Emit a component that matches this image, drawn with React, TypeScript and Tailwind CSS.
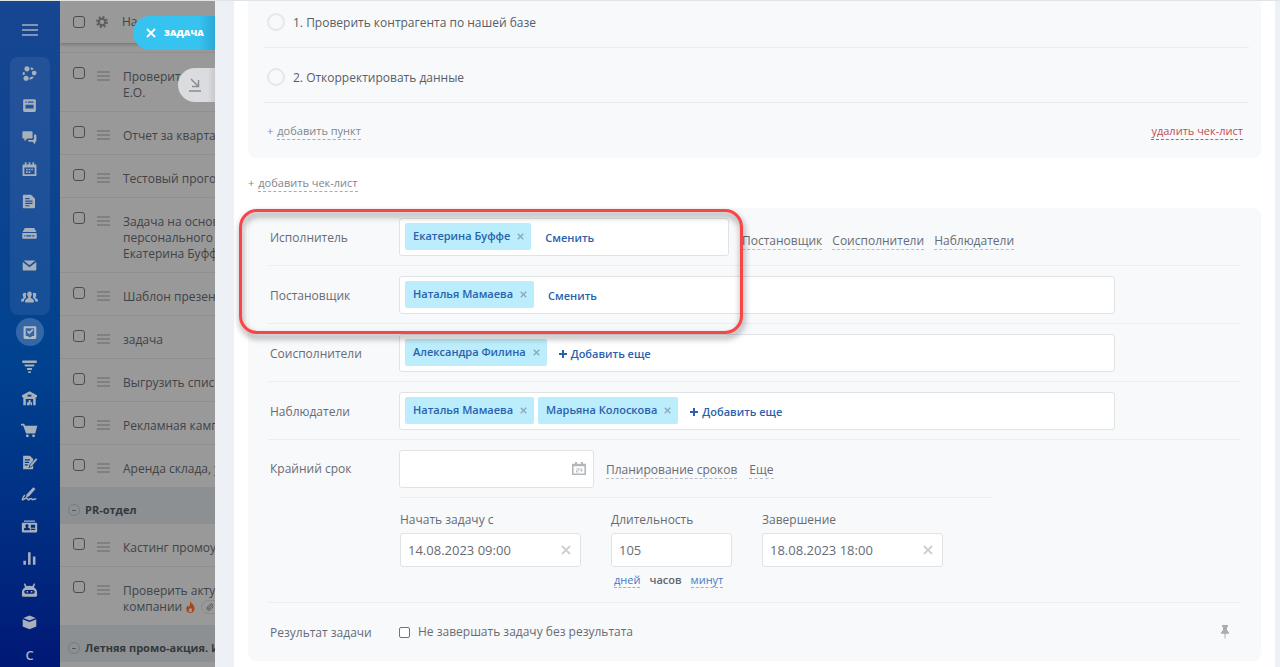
import type { ReactNode } from 'react';
import { Paperclip } from 'lucide-react';

const menuIcons: { name: string; icon: ReactNode }[] = [
  {
    name: 'Совместная работа',
    icon: (
      <>
        <circle cx="7" cy="4.500" r="3" />
        <circle cx="15.500" cy="9.500" r="2.800" />
        <circle cx="6" cy="15.500" r="3" />
        <path d="M11.500 3.800a6.500 6.500 0 0 1 2.500 1.500M14 14a6.500 6.500 0 0 1-4 2.300M3.500 8.500a7 7 0 0 0-.3 3" fill="none" stroke="currentColor" strokeWidth="2.400" />
      </>
    ),
  },
  {
    name: 'Лента',
    icon: <path fillRule="evenodd" d="M4 2.500h12A1.500 1.500 0 0 1 17.500 4v12a1.500 1.500 0 0 1-1.500 1.500H4A1.500 1.500 0 0 1 2.500 16V4A1.500 1.500 0 0 1 4 2.500Zm1.200 2.700v1.600h1.600V5.200Zm2.900 0v1.600h6.700V5.200ZM5.200 9v4.500h9.600V9Z" />,
  },
  {
    name: 'Чат',
    icon: <path d="M3 2.500h9.200c.8 0 1.400.6 1.400 1.400v6c0 .8-.6 1.400-1.400 1.400H7.500L4 14.300v-3H3c-.8 0-1.400-.6-1.400-1.400v-6c0-.8.6-1.400 1.400-1.400Zm12.200 4h1.500c.8 0 1.400.6 1.400 1.400v5.800c0 .8-.6 1.400-1.400 1.400v3L13.500 15H9.700c-.8 0-1.400-.6-1.400-1.400v-.8h5.500c.8 0 1.400-.6 1.400-1.400Z" />,
  },
  {
    name: 'Календарь',
    icon: <path fillRule="evenodd" d="M4.500 1.500h2V4H9V1.500h2V4h2.500V1.500h2V4H17c.7 0 1.200.5 1.200 1.200v11.300c0 .7-.5 1.200-1.200 1.200H3c-.7 0-1.200-.5-1.200-1.200V5.200C1.800 4.500 2.300 4 3 4h1.500ZM4 7.500v8h12v-8ZM6 9h2v2H6Zm3 0h2v2H9Zm3 0h2v2h-2Zm-6 3h2v2H6Zm3 0h2v2H9Z" />,
  },
  {
    name: 'Документы',
    icon: <path fillRule="evenodd" d="M3.500 2h8.300L16.500 6.700v10c0 .7-.5 1.300-1.300 1.300H3.500c-.8 0-1.300-.6-1.300-1.300V3.300C2.200 2.600 2.700 2 3.500 2ZM5 6v1.400h5V6Zm0 2.800v1.400h8.500V8.800Zm0 2.800V13h8.500v-1.400Zm0 2.700v1.400h5v-1.400Z" />,
  },
  {
    name: 'Диск',
    icon: <path fillRule="evenodd" d="M4.500 3.500h11L18.200 8.300H1.800ZM1.500 9.500h17V15c0 .8-.6 1.300-1.300 1.300H2.800c-.7 0-1.300-.5-1.300-1.300Zm2.500 2.600v1.400h1.300v-1.400Zm2.300 0v1.400h5.700v-1.400Zm7 0v1.400h2.500v-1.400Z" />,
  },
  {
    name: 'Почта',
    icon: <path d="M3 4h14l-7 5.700ZM2 5.800l8 6.200 8-6.200v9c0 .7-.5 1.200-1.200 1.200H3.200C2.500 16 2 15.500 2 14.800Z" />,
  },
  {
    name: 'Группы',
    icon: (
      <>
        <path d="M10 3c1.700 0 2.700 1.200 2.700 3 0 1.500-.6 2.600-1.200 3.200v1.500l2.600 1.300c.7.400 1 1 1 1.900V16H4.900v-2.100c0-.9.3-1.500 1-1.900l2.600-1.300V9.200C7.900 8.600 7.300 7.500 7.300 6c0-1.800 1-3 2.700-3Z" />
        <path d="M4.300 4.500c-1.500 0-2.300 1-2.300 2.500 0 1.200.4 2 .9 2.500v1.200L1 11.800c-.6.3-1 .9-1 1.700v1.300h3.400c0-2 .4-3 1.500-3.700l1.200-.7c-.6-1.800-.3-3.900.1-5.200-.5-.4-1.200-.7-1.900-.7ZM15.700 4.500c1.500 0 2.300 1 2.300 2.500 0 1.200-.4 2-.9 2.500v1.200l1.900 1.100c.6.300 1 .9 1 1.700v1.300h-3.400c0-2-.4-3-1.500-3.700l-1.200-.7c.6-1.800.3-3.900-.1-5.200.5-.4 1.200-.7 1.900-.7Z" />
      </>
    ),
  },
  {
    name: 'Задачи',
    icon: <path fillRule="evenodd" d="M4.500 2.500h12A1.500 1.500 0 0 1 18 4v12a1.500 1.500 0 0 1-1.500 1.500h-12A1.500 1.500 0 0 1 3 16V4a1.500 1.500 0 0 1 1.500-1.500Zm1 2.500v9H8l1.300 1.500h2.400L13 14h2.500V5ZM7 9l1.300-1.300 1.500 1.500 3.600-3.400L14.700 7l-4.900 5Z" />,
  },
  {
    name: 'CRM',
    icon: <path d="M1.500 3h17v2.800h-17Zm2.500 4.500h12l-.8 2.500H4.800Zm2.700 4.200h6.600l-.8 2.300H7.500Zm1.800 3.800h3v2h-3Z" />,
  },
  {
    name: 'Склад',
    icon: <path fillRule="evenodd" d="m10 1.500 8.800 4.600v2.500h-1.500v9.200h-3V10.500H5.700v7.300h-3V8.600H1.200V6.100ZM7.800 5.500v2h4.400v-2ZM7 14.500h2v-2.700h2.200v2.700H13v3.300h-1.700V16h-1v1.800H7Z" />,
  },
  {
    name: 'Магазин',
    icon: (
      <>
        <path d="M0 2h3.700l1.200 2.500h14.300l-2.400 9H6L2.500 4H0Z" />
        <circle cx="7.500" cy="16.300" r="1.700" />
        <circle cx="14.800" cy="16.300" r="1.700" />
      </>
    ),
  },
  {
    name: 'Шаблоны',
    icon: (
      <>
        <path fillRule="evenodd" d="M2.500 2h8L14.300 5.800v2L10 12.500l-1.200 4 3.500-1.200 2-2v3.400c0 .8-.5 1.300-1.300 1.300H2.500Zm2 4.300v1.400h6V6.300Zm0 2.900v1.400h5V9.200Zm0 2.800v1.400H8V12Z" />
        <path d="m17.500 5 1.700 1.400-6.400 7.700-2.600 1.200.7-2.700Z" />
      </>
    ),
  },
  {
    name: 'Подпись',
    icon: (
      <>
        <path d="m14.500 1.500 2.500 2-7.500 8.700-4 1.600 1.300-4Z" />
        <path d="M4.500 10.500C2.500 13 1 15.200 1.700 16c.9.900 3.300-2.200 5-2 1.100.2.900 2.200 2.200 2.200 1.100 0 1.600-1.600 2.700-1.600s1.200 1.400 2.300 1.400 2.100-.9 4.100-1" fill="none" stroke="currentColor" strokeWidth="1.800" />
      </>
    ),
  },
  {
    name: 'Контакты',
    icon: <path fillRule="evenodd" d="M3.500 3h13v1.500h-13ZM2 5.500h16c.6 0 1 .4 1 1v9.500c0 .6-.4 1-1 1H2c-.6 0-1-.4-1-1V6.500c0-.6.4-1 1-1ZM7 7.300c-1.200 0-1.900.8-1.900 1.900 0 .9.4 1.500.9 1.900l-2.500 1.300v2h7v-2L8 11.100c.5-.4.9-1 .9-1.900 0-1.100-.7-1.900-1.900-1.900Zm4.600.7v3.500h5V8Zm0 4.500v1.500h5v-1.500Z" />,
  },
  {
    name: 'Аналитика',
    icon: <path d="M2.800 12.500h3v4.800h-3Zm5.500-10h3v14.800h-3ZM14 7.500h3v9.800h-3Z" />,
  },
  {
    name: 'Роботы',
    icon: <path fillRule="evenodd" d="m4.500 1.500 2.300 3.600a9 9 0 0 1 6.400 0l2.300-3.600 1.200.8-1.500 3.800c2.300 1.300 3.600 3.300 3.700 6.200V16c0 .8-.5 1.300-1.300 1.300H2.400c-.8 0-1.300-.5-1.300-1.300v-3.700c.1-2.900 1.400-4.900 3.700-6.200L3.300 2.300ZM6 9.300a2.200 2.200 0 0 0 0 4.400h8a2.200 2.200 0 0 0 0-4.400Zm.6 1.400h1.800v1.700H6.600Zm5 0h1.800v1.700h-1.800Z" />,
  },
  {
    name: 'Маркет',
    icon: <path d="m10 1.800 7.300 2.900L10 7.600 2.700 4.700ZM2 6.200l8 3.200 8-3.200v8.500L10 18l-8-3.300Z" />,
  },
];

type ListItem = { group?: boolean; title: string; lines: string[]; fire?: boolean };

const tasks: ListItem[] = [
  { title: 'Проверить', lines: ['Проверит', 'Е.О.'] },
  { title: 'Отчет', lines: ['Отчет за кварта.'] },
  { title: 'Прогон', lines: ['Тестовый прого'] },
  { title: 'Персональный', lines: ['Задача на основ', 'персонального', 'Екатерина Буфф'] },
  { title: 'Шаблон', lines: ['Шаблон презен'] },
  { title: 'задача', lines: ['задача'] },
  { title: 'Выгрузка', lines: ['Выгрузить списс'] },
  { title: 'Реклама', lines: ['Рекламная камп'] },
  { title: 'Аренда', lines: ['Аренда склада, у'] },
  { group: true, title: 'PR-отдел', lines: [] },
  { title: 'Кастинг', lines: ['Кастинг промоу'] },
  { title: 'Актуальность', lines: ['Проверить актуа', 'компании'], fire: true },
  { group: true, title: 'Летняя промо-акция. И', lines: [] },
];

const dashed = 'border-b border-dashed whitespace-nowrap';

function Cross({ className }: { className: string }) {
  return (
    <svg viewBox="0 0 10 10" className={className} stroke="currentColor" strokeWidth="1.800">
      <path d="M1 1l8 8M9 1l-8 8" />
    </svg>
  );
}

function MenuIcon({ index }: { index: number }) {
  const item = menuIcons[index];
  return (
    <a href="#" aria-label={item.name} className="flex h-8 w-10 shrink-0 items-center justify-center">
      <svg viewBox="0 0 20 20" className="size-[17px]" fill="currentColor">{item.icon}</svg>
    </a>
  );
}

function SideMenu() {
  return (
    <nav className="flex w-[60px] shrink-0 flex-col items-center bg-linear-to-b from-[#174692] via-[#00428f] via-55% to-[#001876] pr-px text-[#a7b0bb]">
      <button aria-label="Меню" className="flex h-14 shrink-0 items-center justify-center pt-0.5">
        <svg viewBox="0 0 16 12" className="h-3 w-4" fill="none" stroke="currentColor" strokeWidth="1.500">
          <path d="M0 1h16M0 6h16M0 11h16" />
        </svg>
      </button>
      <div className="shrink-0 rounded-lg bg-white/7 pb-[2px]">
        {[0, 1, 2, 3, 4, 5, 6, 7].map((i) => <MenuIcon key={i} index={i} />)}
      </div>
      <div className="mt-[3px] mb-1 flex size-7 shrink-0 items-center justify-center rounded-full bg-white/20 text-[#b4bcc5]">
        <MenuIcon index={8} />
      </div>
      {[9, 10, 11, 12, 13, 14, 15, 16, 17].map((i) => <MenuIcon key={i} index={i} />)}
      <a href="#" className="flex h-9 shrink-0 items-center text-[13px] font-semibold">C</a>
    </nav>
  );
}

function DimCheckbox({ label }: { label: string }) {
  return (
    <input type="checkbox" aria-label={label} className="size-3 shrink-0 appearance-none rounded-[3px] border border-[#4c4c4c]" />
  );
}

function TaskList() {
  return (
    <aside className="relative w-[155px] shrink-0 overflow-hidden bg-[#999999] text-xs text-[#404347]">
      <div className="relative flex h-[42px] items-center pl-[13px] shadow-[0_2px_3px_rgba(0,0,0,0.2)]">
        <DimCheckbox label="Выбрать все" />
        <svg viewBox="0 0 12 12" className="ml-[11px] size-3" fill="none" stroke="#5b5e61" strokeWidth="2">
          <circle cx="6" cy="6" r="3.200" />
          <circle cx="6" cy="6" r="5" strokeDasharray="1.960 1.960" />
        </svg>
        <span className="ml-[14px]">На</span>
      </div>
      <div className="h-2.5 border-b border-[#8f8f8f]" />
      {tasks.map((task) =>
        task.group ? (
          <div key={task.title} className="flex h-9 items-center gap-1 bg-[#8c9092] pt-2 pl-2 text-[11px] font-bold whitespace-nowrap text-[#34383c]">
            <button aria-label="Свернуть" className="flex size-3 shrink-0 items-center justify-center rounded-full border border-[#787c7e]">
              <span className="h-px w-1 bg-[#55595c]" />
            </button>
            <span className="ml-px">{task.title}</span>
          </div>
        ) : (
          <div key={task.title} className="flex items-start border-b border-[#8f8f8f] pt-[14px] pb-2.5 pl-[13px]">
            <DimCheckbox label={task.title} />
            <svg viewBox="0 0 13 10" className="mt-1 ml-3 h-2.5 w-[13px] shrink-0" stroke="#75787b" strokeWidth="1.500">
              <path d="M0 1h13M0 5h13M0 9h13" />
            </svg>
            <div className="mt-0.5 ml-[13px] leading-4 whitespace-nowrap">
              {task.lines.map((line, i) => (
                <div key={line} className="flex items-center">
                  {line}
                  {task.fire && i === 1 && (
                    <>
                      <svg viewBox="0 0 9 12" className="ml-1 h-3 w-[9px]">
                        <path d="M4 0c1 2 4.500 4 4.500 7.500A4.200 4.200 0 0 1 4.300 12 4.200 4.200 0 0 1 .3 7.800C.3 6.300 1 5.300 1.600 4.500L2.500 6C4 4.500 4.500 2.500 4 0Z" fill="#ad4310" />
                        <path d="M4.500 6.500c1.300 1.300 1.700 2 1.700 3a1.800 1.800 0 0 1-3.600 0c0-1 1-1.500 1.900-3Z" fill="#999999" />
                      </svg>
                      <span className="ml-1.5 flex h-3.5 w-8 items-center rounded-full border border-[#8a8a8a] pl-1">
                        <Paperclip className="size-2" />
                      </span>
                    </>
                  )}
                </div>
              ))}
            </div>
          </div>
        ),
      )}

      {/* slider tabs */}
      <button className="absolute top-[15px] right-0 flex h-[34px] w-[82px] items-center gap-2 rounded-l-full bg-linear-to-r from-[#37c3f0] from-80% to-[#2aa9d8] pl-[13px] text-[9px] font-extrabold text-white">
        <Cross className="size-2.5" />
        ЗАДАЧА
      </button>
      <button aria-label="Свернуть" className="absolute top-[67px] right-0 flex h-[34px] w-[37px] items-center rounded-l-full bg-linear-to-r from-[#dadcdf] from-80% to-[#c6c8cb] pl-[11px] text-[#888d94]">
        <svg viewBox="0 0 12 14" className="h-3.5 w-3" fill="none" stroke="currentColor" strokeWidth="1.500">
          <path d="M2 1l7 7M9.500 2v6.500H3M0 13h12" />
        </svg>
      </button>
    </aside>
  );
}

function ChecklistItem({ id, text }: { id: string; text: string }) {
  return (
    <li className="flex h-[55px] items-center gap-2 border-b border-[#e9edf0] pt-[3px] pl-[3px]">
      <input id={id} type="checkbox" className="size-[18px] appearance-none rounded-full border-2 border-[#e4e8ea]" />
      <label htmlFor={id} className="pt-0.5">{text}</label>
    </li>
  );
}

function Checklist() {
  return (
    <section className="rounded-b-lg bg-[#f8f9fb] pr-3 pl-4">
      <ul className="-mt-2 text-[#565e69]">
        <ChecklistItem id="step-1" text="1. Проверить контрагента по нашей базе" />
        <ChecklistItem id="step-2" text="2. Откорректировать данные" />
      </ul>
      <div className="flex h-[55px] items-center justify-between pt-px pr-1.5 pl-[3px] text-[11px] leading-4">
        <div className="flex gap-1 text-[#80868e]">
          <span>+</span>
          <button className={`${dashed} border-[#a8adb3]`}>добавить пункт</button>
        </div>
        <button className={`${dashed} border-[#c8575c] text-[#c24b50]`}>удалить чек-лист</button>
      </div>
    </section>
  );
}

function Row({ label, children }: { label: string; children: ReactNode }) {
  return (
    <div className="flex h-[58px] items-center border-b border-[#ebeef1] pl-[2px]">
      <span className="w-[129px] shrink-0 pt-0.5">{label}</span>
      {children}
    </div>
  );
}

function PeopleField({ names, action, narrow }: { names: string[]; action: string; narrow?: boolean }) {
  return (
    <div className={`flex h-[38px] items-center gap-1 rounded-[3px] border border-[#dfe3e6] bg-white pl-[5px] text-[11px] font-semibold text-[#2862ae] ${narrow ? 'w-[330px]' : 'mr-[126px] flex-1'}`}>
      {names.map((name) => (
        <span key={name} className="flex h-[27px] items-center gap-[7px] rounded-[2px] bg-[#bcedfc] pr-[7px] pl-2">
          {name}
          <button aria-label={`Убрать: ${name}`} className="text-[#86a8bc]">
            <Cross className="size-[7px]" />
          </button>
        </span>
      ))}
      <button className={`flex items-center gap-1 pt-[3px] ${names.length && action === 'Сменить' ? 'ml-2.5' : 'ml-2'}`}>
        {action === 'Добавить еще' && (
          <svg viewBox="0 0 8 8" className="size-2" stroke="currentColor" strokeWidth="2"><path d="M4 0v8M0 4h8" /></svg>
        )}
        {action}
      </button>
    </div>
  );
}

function DateField({ id, label, value }: { id: string; label: string; value: string }) {
  return (
    <div className="w-[181px]">
      <label htmlFor={id} className="block leading-[18px]">{label}</label>
      <div className="mt-1 flex h-[34px] items-center rounded-[3px] border border-[#dfe3e6] bg-white pr-[9px] pl-[7px] text-[13px]">
        <input id={id} defaultValue={value} className="h-full min-w-0 flex-1 outline-none" />
        <button aria-label="Очистить" className="text-[#cdd0d3]"><Cross className="size-2.5" /></button>
      </div>
    </div>
  );
}

function TaskForm() {
  return (
    <section className="relative rounded-lg bg-[#f8f9fb] px-5 text-[#666c75]">
      <Row label="Исполнитель">
        <PeopleField names={['Екатерина Буффе']} action="Сменить" narrow />
        <div className="ml-[13px] flex gap-2.5 pt-2.5 leading-4">
          {['Постановщик', 'Соисполнители', 'Наблюдатели'].map((role) => (
            <button key={role} className={`${dashed} border-[#b9bec4]`}>{role}</button>
          ))}
        </div>
      </Row>
      <Row label="Постановщик">
        <PeopleField names={['Наталья Мамаева']} action="Сменить" />
      </Row>
      <Row label="Соисполнители">
        <PeopleField names={['Александра Филина']} action="Добавить еще" />
      </Row>
      <Row label="Наблюдатели">
        <PeopleField names={['Наталья Мамаева', 'Марьяна Колоскова']} action="Добавить еще" />
      </Row>

      <div className="flex border-b border-[#ebeef1] pl-[2px]">
        <label htmlFor="deadline" className="w-[129px] shrink-0 pt-[21px]">Крайний срок</label>
        <div className="pb-[14px]">
          <div className="flex h-[58px] w-[594px] items-center border-b border-[#ebeef1]">
            <div className="flex h-[38px] w-[195px] items-center rounded-[3px] border border-[#dfe3e6] bg-white pr-[7px] pl-2">
              <input id="deadline" className="min-w-0 flex-1 outline-none" />
              <button aria-label="Календарь" className="text-[#b4b7ba]">
                <svg viewBox="0 0 14 13" className="h-[13px] w-3.5" fill="none" stroke="currentColor">
                  <path d="M.8 2.500h12.400v9.700H.8ZM.8 3.500h12.400" strokeWidth="1.600" />
                  <path d="M4 0v3M10 0v3" strokeWidth="2" />
                  <path d="M4.500 6.500h2v1.800h-2v1.800h2M8 6.200v2h2M9.800 6.200v4" strokeWidth=".8" />
                </svg>
              </button>
            </div>
            <div className="ml-3 flex gap-3 pt-1 leading-4">
              <button className={`${dashed} border-[#b9bec4]`}>Планирование сроков</button>
              <button className={`${dashed} border-[#b9bec4]`}>Еще</button>
            </div>
          </div>
          <div className="flex gap-[30px] pt-[13px] pl-px">
            <DateField id="start" label="Начать задачу с" value="14.08.2023 09:00" />
            <div className="w-[121px]">
              <label htmlFor="duration" className="block leading-[18px]">Длительность</label>
              <input id="duration" defaultValue="105" className="mt-1 block h-[34px] w-full rounded-[3px] border border-[#dfe3e6] bg-white px-[7px] text-[13px] outline-none" />
              <div className="mt-1.5 flex gap-[9px] pl-[3px] text-[11px] leading-[14px] text-[#3f7cc4]">
                <button className={`${dashed} border-[#8fb2dd]`}>дней</button>
                <button className="border-b border-transparent font-semibold text-[#60666e]">часов</button>
                <button className={`${dashed} border-[#8fb2dd]`}>минут</button>
              </div>
            </div>
            <DateField id="finish" label="Завершение" value="18.08.2023 18:00" />
          </div>
        </div>
      </div>

      <div className="flex h-[58px] items-center pl-[2px]">
        <span className="w-[129px] shrink-0 pt-0.5">Результат задачи</span>
        <input id="need-result" type="checkbox" className="size-[11px] appearance-none rounded-[2px] border border-[#707478] bg-white" />
        <label htmlFor="need-result" className="ml-2 flex-1">Не завершать задачу без результата</label>
        <button aria-label="Закрепить" className="mr-3 text-[#a9adb1]">
          <svg viewBox="0 0 8 14" className="h-3.5 w-2" fill="currentColor">
            <path d="M1 0h6v1.500L6 2.200V5l2 2.500v1.300H4.600L4.300 14h-.6l-.3-5.200H0V7.500L2 5V2.200L1 1.500Z" />
          </svg>
        </button>
      </div>

      {/* callout around the first two rows */}
      <div className="pointer-events-none absolute top-px -left-[9px] h-[125px] w-[504px] rounded-[18px] border-[3px] border-[#fa4546] drop-shadow-[1px_4px_3px_rgba(0,0,0,0.5)]" />
    </section>
  );
}

export default function App() {
  return (
    <div className="flex h-screen overflow-hidden border-t border-[#dfe4e7] bg-white font-['Open_Sans','Noto_Sans',sans-serif] text-xs">
      <SideMenu />
      <TaskList />
      <div className="w-[19px] shrink-0 bg-[#edf1f5]" />
      <main className="min-w-0 flex-1 overflow-hidden px-[14px]">
        <Checklist />
        <div className="flex h-[50px] items-center gap-1 text-[11px] leading-4 text-[#80868e]">
          <span>+</span>
          <button className={`${dashed} border-[#a8adb3]`}>добавить чек-лист</button>
        </div>
        <TaskForm />
      </main>
      <div className="w-[5px] shrink-0 bg-[#edf1f5]" />
    </div>
  );
}
